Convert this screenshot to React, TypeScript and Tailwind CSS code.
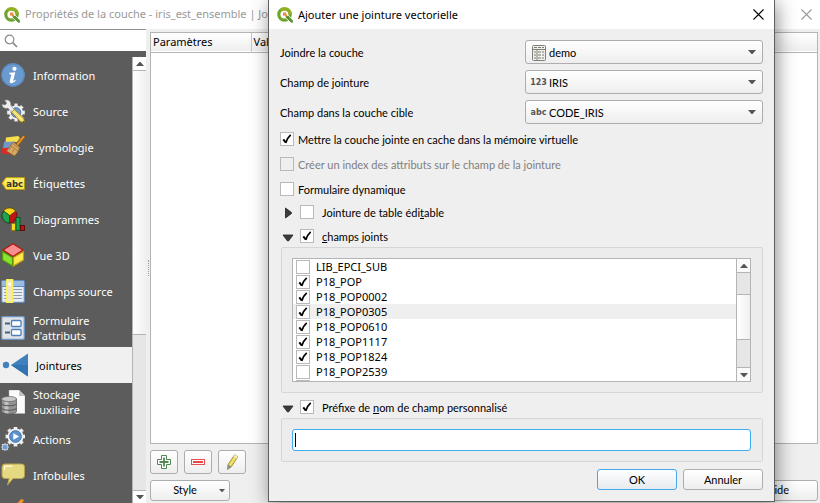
import { ReactNode, useState } from "react";

const UI = "font-['Noto_Sans','Open_Sans',sans-serif]";
const LABELS = "font-['Lato','Noto_Sans',sans-serif]";
const BUTTON =
  "rounded-[3px] border border-[#adadad] bg-linear-to-b from-white to-[#eeeeee] text-black";

function QgisLogo({ className = "" }: { className?: string }) {
  return (
    <svg viewBox="0 0 16 16" className={`size-4 shrink-0 ${className}`} aria-hidden="true">
      <circle cx="7.500" cy="7.500" r="5.700" fill="#fff" stroke="#6ea32f" strokeWidth="3.200" />
      <path d="M3.500 3.500A5.700 5.700 0 0 1 13.200 7.500" fill="none" stroke="#93b023" strokeWidth="3.200" />
      <path d="M8.500 8.500h3l5 5.200V16h-2.300l-5.700-5.200z" fill="#589632" stroke="#fff" strokeWidth=".8" />
      <path d="M6 5.600h3.200v1.500l1.200 1.300-1.600 1.500-1.300-1.300H6z" fill="#ee8a3c" />
    </svg>
  );
}

function CloseIcon() {
  return (
    <svg viewBox="0 0 11 11" className="size-[11px]" fill="none" stroke="currentColor" strokeWidth="1.1" aria-hidden="true">
      <path d="M.5.5l10 10M10.500.5l-10 10" />
    </svg>
  );
}

function Triangle({ dir, className = "h-1 w-2" }: { dir: "up" | "down"; className?: string }) {
  return (
    <svg viewBox="0 0 8 4" className={className} aria-hidden="true">
      <path d={dir === "up" ? "M0 4h8L4.500 0h-1z" : "M0 0h8L4.500 4h-1z"} fill="#555" />
    </svg>
  );
}

/* ---------- sidebar icons ---------- */

function Icon({ children }: { children: ReactNode }) {
  return (
    <svg viewBox="0 0 24 24" className="size-6 shrink-0" aria-hidden="true">
      {children}
    </svg>
  );
}

const GEAR_TEETH = [0, 45, 90, 135, 180, 225, 270, 315];

function Gear({ cx, cy, r, tooth }: { cx: number; cy: number; r: number; tooth: number }) {
  return (
    <g fill="#f0f0f0" stroke="#8b8b8b" strokeWidth=".5">
      {GEAR_TEETH.map((a) => (
        <rect
          key={a}
          x={cx - tooth / 2}
          y={cy - r - tooth * 0.55}
          width={tooth}
          height={tooth}
          transform={`rotate(${a} ${cx} ${cy})`}
        />
      ))}
      <circle cx={cx} cy={cy} r={r} stroke="none" />
    </g>
  );
}

const InfoIcon = () => (
  <Icon>
    <circle cx="12" cy="12" r="11.800" fill="#6a9ad0" />
    <circle cx="12" cy="12" r="11.300" fill="none" stroke="#5585bd" />
    <circle cx="13.500" cy="5.800" r="2.100" fill="#fff" />
    <path d="M8.500 9.800l5.800-.6-2 8c-.2 1 .6.900 2-.4l.5.700c-3.600 4-6.800 3-6 .2l1.600-6-2.200-.8z" fill="#fff" />
  </Icon>
);

const SourceIcon = () => (
  <Icon>
    <Gear cx={15} cy={13.500} r={7} tooth={3.600} />
    <circle cx="15" cy="13.500" r="4.800" fill="#6f9fd2" stroke="#4c78ab" />
    <path d="M1 5.500l3.300.6 1.500-2-2-2.700C7.500.3 10.400 2.500 9.600 6.500l4.600 5-2.600 2.600-4.800-5C4 10 1.200 8.500 1 5.500z" fill="#eee" stroke="#999" strokeWidth=".6" />
    <path d="M10.500 13.200l3-2.800 9.300 8.800 1 4.300-4.300-.6z" fill="#f0d968" stroke="#857022" strokeWidth=".8" />
    <path d="M12 12l9.500 9.500" stroke="#fff2a5" />
    <path d="M22.300 22l1.500 1.600-2.300-.4z" fill="#222" />
  </Icon>
);

const SymbologyIcon = () => (
  <Icon>
    <path d="M5 2.500l12-1.500 2 2-3 4L4.500 7z" fill="#f5df4a" />
    <path d="M3 7l11-.5-3 8-9-1z" fill="#7396c8" />
    <path d="M1 13.500l8-1 2 7-11-1z" fill="#df2929" />
    <path d="M22.800 1.800l-6.500 8" stroke="#a55e0d" strokeWidth="3" strokeLinecap="round" />
    <path d="M22.600 1.800l-6.500 8" stroke="#e89a33" strokeWidth="1.600" strokeLinecap="round" />
    <path d="M12.500 7l6.500 5.500-2.500 5-3 3.500-8-5z" fill="#d6a968" stroke="#93601f" strokeWidth=".7" />
    <path d="M9.500 10.500l7.500 5.500M11.500 8.500l6.500 5M8 15l2.500-3M11 17.500l2.500-3.500" stroke="#9d6929" strokeWidth=".7" />
  </Icon>
);

const LabelsIcon = () => (
  <Icon>
    <path d="M1 12.200l4-5.700h18.500v12H5z" fill="#fbe44d" stroke="#b89b14" strokeWidth="1" />
    <path d="M5.500 7.500h17.500v4H3z" fill="#fff08a" opacity=".6" />
    <text x="5.200" y="15.800" fontSize="8.500" fontWeight="700" fontFamily="DejaVu Sans, sans-serif" fill="#333">abc</text>
  </Icon>
);

const DiagramIcon = () => (
  <Icon>
    <circle cx="8.500" cy="8.500" r="7.500" fill="#c01414" stroke="#5c0808" strokeWidth=".8" />
    <path d="M8.500 8.500L2.500 4A7.500 7.500 0 0 1 14.500 4z" fill="#f8d71c" stroke="#756500" strokeWidth=".8" />
    <path d="M8.500 8.500L2.500 4A7.500 7.500 0 0 0 8.500 16z" fill="#1da54c" stroke="#06501f" strokeWidth=".8" />
    <rect x="10.500" y="16.500" width="4" height="7" fill="#f8d71c" stroke="#a66c08" strokeWidth=".9" />
    <rect x="15" y="10.500" width="4" height="13" fill="#1da54c" stroke="#06501f" strokeWidth=".9" />
    <rect x="19.500" y="18.500" width="4" height="5" fill="#c01414" stroke="#5c0808" strokeWidth=".9" />
  </Icon>
);

const CubeIcon = () => (
  <Icon>
    <path d="M12 .8L22 7l-10 6.500L2 7z" fill="#f58f8f" stroke="#b51616" strokeWidth="1.300" />
    <path d="M1.500 8.500l10 6V23l-10-6z" fill="#8ae234" stroke="#4e9a06" strokeWidth="1.200" />
    <path d="M22.500 8.500l-10 6V23l10-6z" fill="#fce94f" stroke="#c4a000" strokeWidth="1.200" />
  </Icon>
);

const FieldsIcon = () => (
  <Icon>
    <rect x=".7" y="1.700" width="22.600" height="21.600" rx="1" fill="#e9eef5" stroke="#5f8bbf" strokeWidth="1.300" />
    <rect x="1" y="2" width="22" height="5" fill="#9dbce2" />
    <path d="M3 10.500h18M3 13.500h18M3 16.500h18M3 19.500h18" stroke="#8d9aab" strokeWidth="1" />
    <path d="M1 7.500h22" stroke="#5f8bbf" />
    <rect x="5.800" y=".8" width="5.800" height="22.600" fill="#f1e6c0" stroke="#fbf15a" strokeWidth="1.500" />
    <circle cx="8.700" cy="5" r="1.500" fill="#fff" />
  </Icon>
);

const FormIcon = () => (
  <Icon>
    <rect x=".7" y=".7" width="22.600" height="22.600" rx="1.200" fill="#dfe3e8" stroke="#6c95c8" strokeWidth="1.300" />
    <path d="M4 7.500h5M4 16.500h5" stroke="#4c6079" strokeWidth="2" />
    <rect x="10.500" y="4.500" width="9.500" height="6" rx="1" fill="#fff" stroke="#4e7fbb" strokeWidth="1.300" />
    <rect x="10.500" y="13.500" width="9.500" height="6" rx="1" fill="#fff" stroke="#4e7fbb" strokeWidth="1.300" />
  </Icon>
);

const JoinIcon = () => (
  <svg viewBox="0 0 28 24" className="h-6 w-7 shrink-0" aria-hidden="true">
    <circle cx="6" cy="12" r="3.200" fill="#4382bf" />
    <path d="M11 12L28 .5v23z" fill="#3f80bd" />
    <path d="M11 12h17v11.500z" fill="#3273b1" />
  </svg>
);

const StorageIcon = () => (
  <Icon>
    <path d="M8 0h10l6 6v17.500H8z" fill="#fbfbfb" stroke="#ababab" strokeWidth=".5" />
    <path d="M18 0v6h6z" fill="#c5c5c5" />
    <path d="M.5 9v12.500c0 3 15 3 15 0V9z" fill="#929292" stroke="#555" strokeWidth=".7" />
    <path d="M3.500 11v12l4 .8V12z" fill="#d5d5d5" opacity=".7" />
    <ellipse cx="8" cy="9" rx="7.500" ry="2.600" fill="#c7c7c7" stroke="#666" strokeWidth=".7" />
    <path d="M.5 13.500c0 3 15 3 15 0M.5 18c0 3 15 3 15 0" fill="none" stroke="#555" />
  </Icon>
);

const ActionsIcon = () => (
  <Icon>
    <Gear cx={14.500} cy={9.500} r={8} tooth={3.600} />
    <circle cx="14.500" cy="9.500" r="5.800" fill="#5d93cf" stroke="#3d6ea6" />
    <path d="M12.300 6.200v6.600l5.700-3.300z" fill="#fff" />
    <Gear cx={4} cy={20} r={3} tooth={1.600} />
    <circle cx="4" cy="20" r="2.600" fill="#6f9fd2" />
  </Icon>
);

const TipsIcon = () => (
  <Icon>
    <path d="M4 1h16.500a3 3 0 0 1 3 3v8.500a3 3 0 0 1-3 3H12L6.500 22l1.700-6.500H4a3 3 0 0 1-3-3V4a3 3 0 0 1 3-3z" fill="#e6d983" stroke="#b7a447" />
    <path d="M3.500 7V5c0-1 .8-1.800 2-1.800h6" stroke="#fffbe0" strokeWidth="1.300" fill="none" />
  </Icon>
);

const NAV: { label: string; icon: ReactNode }[] = [
  { label: "Information", icon: <InfoIcon /> },
  { label: "Source", icon: <SourceIcon /> },
  { label: "Symbologie", icon: <SymbologyIcon /> },
  { label: "Étiquettes", icon: <LabelsIcon /> },
  { label: "Diagrammes", icon: <DiagramIcon /> },
  { label: "Vue 3D", icon: <CubeIcon /> },
  { label: "Champs source", icon: <FieldsIcon /> },
  { label: "Formulaire d'attributs", icon: <FormIcon /> },
  { label: "Jointures", icon: <JoinIcon /> },
  { label: "Stockage auxiliaire", icon: <StorageIcon /> },
  { label: "Actions", icon: <ActionsIcon /> },
  { label: "Infobulles", icon: <TipsIcon /> },
];

function Sidebar() {
  return (
    <aside className="flex w-[146px] shrink-0 flex-col bg-[#5c5c5c]">
      <label className="flex h-[22px] shrink-0 items-center border-t border-[#8f8f8f] bg-white pl-1">
        <svg viewBox="0 0 14 14" className="size-[14px]" fill="none" stroke="#8a8a8a" strokeWidth="1.200" aria-hidden="true">
          <circle cx="5.500" cy="5.500" r="4.300" />
          <path d="M8.700 8.700l4.300 4.300" strokeWidth="1.700" />
        </svg>
        <input type="text" aria-label="Rechercher" className="min-w-0 flex-1 bg-transparent px-1 text-[11px] outline-none" />
      </label>
      <div className="mt-[6px] flex min-h-0 flex-1">
        <nav className="min-w-0 flex-1 overflow-hidden">
          {NAV.map(({ label, icon }) => {
            const active = label === "Jointures";
            return (
              <a
                key={label}
                href="#"
                aria-current={active ? "page" : undefined}
                className={`flex min-h-9 items-center gap-2 py-1 text-[11px] leading-[15px] ${
                  active ? "bg-[#f0f0f0] text-black" : "pl-px text-white"
                }`}
              >
                {icon}
                <span className={label.length > 14 ? "w-16" : ""}>{label}</span>
              </a>
            );
          })}
          <svg viewBox="0 0 24 24" className="mt-1 size-6" aria-hidden="true">
            <path d="M15 9l6-7 3 1-4 7z" fill="#f0932b" />
          </svg>
        </nav>
        <div className="flex w-[14px] flex-col border-l border-[#b4b4b4] bg-[#e6e6e6]">
          <button aria-label="Défiler vers le haut" className="grid h-[14px] shrink-0 place-items-center border-b border-[#b4b4b4] bg-white">
            <Triangle dir="up" />
          </button>
          <div className="flex min-h-0 flex-1 flex-col">
            <div className="h-[63%] border-b border-[#b4b4b4] bg-linear-to-r from-white to-[#f0f0f0]" />
          </div>
          <button aria-label="Défiler vers le bas" className="grid h-[13px] shrink-0 place-items-center border-t border-[#b4b4b4] bg-white">
            <Triangle dir="down" />
          </button>
        </div>
      </div>
    </aside>
  );
}

/* ---------- dialog ---------- */

function Check({
  id,
  label,
  defaultChecked = false,
  disabled = false,
}: {
  id: string;
  label?: string;
  defaultChecked?: boolean;
  disabled?: boolean;
}) {
  return (
    <span className="grid size-[14px] shrink-0 place-items-center">
      <input
        id={id}
        type="checkbox"
        aria-label={label}
        defaultChecked={defaultChecked}
        disabled={disabled}
        className="peer col-start-1 row-start-1 size-[14px] appearance-none border border-[#b9b9b9] bg-white disabled:bg-[#efefef]"
      />
      <svg
        viewBox="0 0 10 10"
        className="pointer-events-none invisible col-start-1 row-start-1 size-[10px] peer-checked:visible"
        fill="none"
        stroke="#000"
        aria-hidden="true"
      >
        <path d="M1.300 5.300l2.400 3" strokeWidth="2" />
        <path d="M3.700 9C4.500 5.700 6.200 3 8.700.8" strokeWidth="1.700" />
      </svg>
    </span>
  );
}

function FieldLabel({ htmlFor, children }: { htmlFor: string; children: ReactNode }) {
  return (
    <label htmlFor={htmlFor} className="pt-[2px]">
      {children}
    </label>
  );
}

function LayerIcon() {
  return (
    <svg viewBox="0 0 14 16" className="h-4 w-[14px]" aria-hidden="true">
      <rect x=".5" y=".5" width="13" height="15" rx="1" fill="#f2f2ec" stroke="#7f7f78" />
      <path d="M1 4.500h12M5 4.500v11" stroke="#7f7f78" />
      <path d="M2 2.500h3M6 2.500h3M10 2.500h2M2 7h2M6 7h3M10 7h2M2 10h2M6 10h3M10 10h2M2 13h2M6 13h3M10 13h2" stroke="#77776f" />
    </svg>
  );
}

function Combo({ id, label, value, icon }: { id: string; label: string; value: string; icon: ReactNode }) {
  return (
    <div className="flex items-center justify-between">
      <FieldLabel htmlFor={id}>{label}</FieldLabel>
      <div className="relative w-[238px]">
        <select
          id={id}
          className={`block h-6 w-full appearance-none pt-px pr-6 pl-[23px] text-[11px] ${BUTTON}`}
        >
          <option>{value}</option>
        </select>
        <span className="pointer-events-none absolute inset-y-0 left-[5px] flex w-[17px] items-center justify-center pt-px font-['DejaVu_Sans',sans-serif] text-[8px] font-bold text-[#555]">
          {icon}
        </span>
        <Triangle dir="down" className="pointer-events-none absolute top-[10px] right-[7px] h-1 w-2" />
      </div>
    </div>
  );
}

function GroupHead({ id, open, checked, children }: { id: string; open: boolean; checked: boolean; children: ReactNode }) {
  return (
    <div className="flex h-[14px] items-center pl-[2px]">
      <button type="button" aria-label={open ? "Replier" : "Déplier"} className="grid w-[12px] place-items-center pt-[2px]">
        <svg viewBox="0 0 12 12" className="size-3" aria-hidden="true">
          <path
            d={open ? "M1 4h10L6.500 10h-1z" : "M3.500 1l6 4.500v1L3.500 11z"}
            fill="#3c3c3c"
            stroke="#222"
            strokeWidth=".8"
          />
        </svg>
      </button>
      <span className="ml-[6px] flex items-center gap-2">
        <Check id={id} defaultChecked={checked} />
        <FieldLabel htmlFor={id}>{children}</FieldLabel>
      </span>
    </div>
  );
}

const FIELDS: [string, boolean][] = [
  ["LIB_EPCI_SUB", false],
  ["P18_POP", true],
  ["P18_POP0002", true],
  ["P18_POP0305", true],
  ["P18_POP0610", true],
  ["P18_POP1117", true],
  ["P18_POP1824", true],
  ["P18_POP2539", false],
];

function FieldList() {
  return (
    <div className="flex h-[124px] border border-[#b4b4b4] bg-white">
      <ul className={`min-w-0 flex-1 overflow-hidden ${UI}`}>
        {FIELDS.map(([name, on], i) => (
          <li key={name} className={`flex h-[15px] items-center gap-[6px] pl-[3px] text-[11px] leading-[15px] ${i === 3 ? "bg-[#efefef]" : ""}`}>
            <Check id={name} defaultChecked={on} />
            <label htmlFor={name}>{name}</label>
          </li>
        ))}
        <li className="flex h-[15px] items-center pl-[3px]">
          <Check id="next-field" label="Champ suivant" />
        </li>
      </ul>
      <div className="flex w-[14px] flex-col border-l border-[#b4b4b4] bg-[#e6e6e6]">
        <button type="button" aria-label="Défiler vers le haut" className="grid h-[14px] place-items-center border-b border-[#b4b4b4] bg-[#fafafa]">
          <Triangle dir="up" />
        </button>
        <div className="mt-[21px] h-[46px] border-y border-[#b4b4b4] bg-linear-to-r from-white to-[#f0f0f0]" />
        <button type="button" aria-label="Défiler vers le bas" className="mt-auto grid h-[14px] place-items-center border-t border-[#b4b4b4] bg-[#fafafa]">
          <Triangle dir="down" />
        </button>
      </div>
    </div>
  );
}

function PrefixInput() {
  const [prefix, setPrefix] = useState("");
  return (
    <div className="relative">
      <input
        type="text"
        aria-label="Préfixe de nom de champ personnalisé"
        autoFocus
        value={prefix}
        onChange={(e) => setPrefix(e.target.value)}
        className="block h-[22px] w-full rounded-[3px] border border-[#3daef5] bg-white px-[3px] text-[11px] caret-transparent outline-none"
      />
      {prefix === "" && (
        <span className="pointer-events-none absolute inset-y-1 left-[3px] w-px bg-black" aria-hidden="true" />
      )}
    </div>
  );
}

function JoinDialog() {
  return (
    <div
      role="dialog"
      aria-label="Ajouter une jointure vectorielle"
      className={`absolute top-0 right-[45px] left-[268px] border border-t-0 border-[#5f5f5f] bg-[#efefef] pb-[11px] text-[11px] leading-[14px] text-black shadow-[2px_3px_18px_rgba(0,0,0,0.45)] ${LABELS}`}
    >
      <header className={`flex h-[29px] items-center bg-white pr-[10px] pl-2 text-[11px] ${UI}`}>
        <QgisLogo />
        <h1 className="ml-[5px] flex-1">Ajouter une jointure vectorielle</h1>
        <button aria-label="Fermer">
          <CloseIcon />
        </button>
      </header>
      <form className="px-[11px] pt-[11px]" onSubmit={(e) => e.preventDefault()}>
        <div className="flex flex-col gap-[6px]">
          <Combo id="layer" label="Joindre la couche" value="demo" icon={<LayerIcon />} />
          <Combo id="join-field" label="Champ de jointure" value="IRIS" icon="123" />
          <Combo id="target-field" label="Champ dans la couche cible" value="CODE_IRIS" icon="abc" />
        </div>
        <div className="mt-2 flex flex-col gap-[11px]">
          <div className="flex h-[14px] items-center gap-1">
            <Check id="cache" defaultChecked />
            <FieldLabel htmlFor="cache">Mettre la couche jointe en cache dans la mémoire virtuelle</FieldLabel>
          </div>
          <div className="flex h-[14px] items-center gap-1 text-[#808080]">
            <Check id="index" disabled />
            <FieldLabel htmlFor="index">Créer un index des attributs sur le champ de la jointure</FieldLabel>
          </div>
          <div className="flex h-[14px] items-center gap-1">
            <Check id="dynamic" />
            <FieldLabel htmlFor="dynamic">Formulaire dynamique</FieldLabel>
          </div>
        </div>
        <div className="mt-[9px] flex flex-col gap-[10px]">
          <GroupHead id="editable" open={false} checked={false}>
            Jointure de table édi<u>t</u>able
          </GroupHead>
          <GroupHead id="joined" open checked>
            <u>c</u>hamps joints
          </GroupHead>
        </div>
        <div className="mt-1 ml-px rounded-[2px] border border-[#d6d6d6] bg-[#ececec] py-[10px] pr-[11px] pl-[10px]">
          <FieldList />
        </div>
        <div className="mt-[7px]">
          <GroupHead id="custom-prefix" open checked>
            Préfixe de <u>n</u>om de champ personnalisé
          </GroupHead>
        </div>
        <div className="mt-1 ml-px rounded-[2px] border border-[#d6d6d6] bg-[#ececec] py-[10px] pr-[11px] pl-[10px]">
          <PrefixInput />
        </div>
        <div className="mt-[7px] flex justify-end gap-[6px]">
          <button className="h-[21px] w-20 rounded-[3px] border border-[#43a8ee] bg-linear-to-b from-white to-[#e6ebef]">OK</button>
          <button type="button" className={`h-[21px] w-20 ${BUTTON}`}>Annuler</button>
        </div>
      </form>
    </div>
  );
}

function ToolButton({ label, children }: { label: string; children: ReactNode }) {
  return (
    <button aria-label={label} className={`grid h-6 w-7 place-items-center ${BUTTON}`}>
      <svg viewBox="0 0 16 16" className="size-4" aria-hidden="true">
        {children}
      </svg>
    </button>
  );
}

export default function App() {
  return (
    <div className={`relative flex h-screen flex-col overflow-hidden bg-[#efefef] text-black ${UI}`}>
      <header className="flex h-[29px] shrink-0 items-center bg-white pr-2 pl-1 text-[11px] text-[#999]">
        <QgisLogo />
        <h1 className="ml-[5px] flex-1 whitespace-nowrap">Propriétés de la couche - iris_est_ensemble | Jo</h1>
        <button aria-label="Fermer la fenêtre">
          <CloseIcon />
        </button>
      </header>
      <div className="flex min-h-0 flex-1">
        <Sidebar />
        <div className="flex w-1 shrink-0 items-center justify-center">
          <div className="mt-1 h-4 border-l border-dotted border-[#a0a0a0]" />
        </div>
        <main className="flex min-w-0 flex-1 flex-col pt-[3px] pr-[2px] pb-[2px]">
          <div className="min-h-0 flex-1 border border-[#b4b4b4] bg-white">
            <table className="w-full table-fixed border-collapse text-left text-[11px]">
              <thead>
                <tr className="h-[19px] border-b border-[#b4b4b4] bg-linear-to-b from-white to-[#eeeeee]">
                  <th className="w-[100px] border-r border-[#c8c8c8] p-0 pl-[2px] font-normal">Paramètres</th>
                  <th className="p-0 pl-[2px] font-normal">Valeur</th>
                </tr>
              </thead>
            </table>
          </div>
          <div className="mt-[6px] flex gap-[6px]">
            <ToolButton label="Ajouter">
              <path d="M5.500 1.500h5v4h4v5h-4v4h-5v-4h-4v-5h4z" fill="#fff" stroke="#4f8a55" />
              <path d="M8 3.500v9M3.500 8h9" stroke="#4f8a55" strokeWidth="1.800" />
            </ToolButton>
            <ToolButton label="Supprimer">
              <rect x="1.500" y="5.500" width="13" height="5" fill="#fff" stroke="#e65050" />
              <path d="M3 8h10" stroke="#ef4545" strokeWidth="2" />
            </ToolButton>
            <ToolButton label="Modifier">
              <path d="M4 10.500L10.500.8l3.300 2-6.400 10L3.500 15.500z" fill="#e6d34c" stroke="#8a7d2b" strokeWidth=".7" />
              <path d="M10.500.8l3.300 2-1.200 1.800-3.300-2z" fill="#f1ebb5" />
              <path d="M4 10.500l3.400 2.300-3.900 2.700z" fill="#8b8b8b" />
              <path d="M6.200 11l6-9" stroke="#fff4a0" strokeWidth=".8" />
            </ToolButton>
          </div>
          <div className={`mt-[6px] flex justify-between text-[11px] ${LABELS}`}>
            <button className={`flex h-[21px] w-20 items-center ${BUTTON}`}>
              <span className="flex-1">Style</span>
              <Triangle dir="down" className="mr-1 h-[3px] w-[6px]" />
            </button>
            <button className={`h-[21px] w-20 ${BUTTON}`}>Aide</button>
          </div>
        </main>
      </div>
      <JoinDialog />
    </div>
  );
}
